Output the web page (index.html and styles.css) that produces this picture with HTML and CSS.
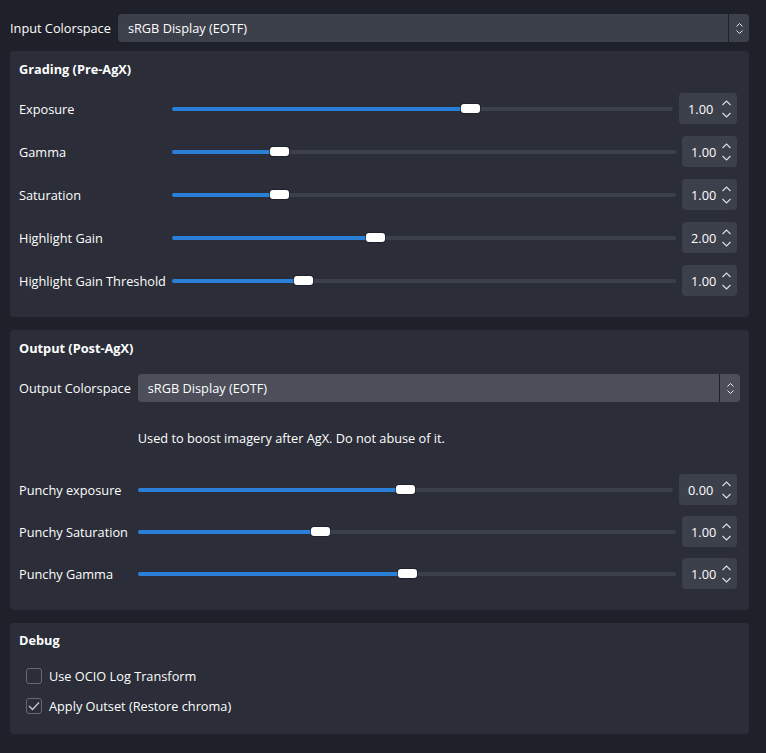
FILE: index.html
```html
<!DOCTYPE html>
<html>
<head>
<meta charset="utf-8">
<link rel="stylesheet" href="styles.css">
</head>
<body>
<div class="page">
  <div class="toprow">
    <span class="lbl">Input Colorspace</span>
    <div class="combo">
      <span class="combo-text">sRGB Display (EOTF)</span>
      <span class="combo-arrow">
        <svg width="7" height="4" viewBox="0 0 7 4"><polyline points="0.5,3.5 3.5,0.5 6.5,3.5" fill="none" stroke="#e6e6e6" stroke-width="1"/></svg>
        <svg width="7" height="4" viewBox="0 0 7 4"><polyline points="0.5,0.5 3.5,3.5 6.5,0.5" fill="none" stroke="#e6e6e6" stroke-width="1"/></svg>
      </span>
    </div>
  </div>

  <section class="panel panel-grading">
    <h2 class="panel-title">Grading (Pre-AgX)</h2>
    <div class="form">
      <span class="lbl">Exposure</span>
      <div class="ctl">
        <div class="slider" style="--p:0.6"><div class="fill"></div><div class="handle"></div></div>
        <div class="spin spin-wide"><span class="val">1.00</span><span class="arrows"><svg width="9" height="6" viewBox="0 0 9 6"><polyline points="0.5,5 4.5,1 8.5,5" fill="none" stroke="#e0e0e0" stroke-width="1.1"/></svg><svg width="9" height="6" viewBox="0 0 9 6"><polyline points="0.5,1 4.5,5 8.5,1" fill="none" stroke="#e0e0e0" stroke-width="1.1"/></svg></span></div>
      </div>
      <span class="lbl">Gamma</span>
      <div class="ctl">
        <div class="slider" style="--p:0.202"><div class="fill"></div><div class="handle"></div></div>
        <div class="spin"><span class="val">1.00</span><span class="arrows"><svg width="9" height="6" viewBox="0 0 9 6"><polyline points="0.5,5 4.5,1 8.5,5" fill="none" stroke="#e0e0e0" stroke-width="1.1"/></svg><svg width="9" height="6" viewBox="0 0 9 6"><polyline points="0.5,1 4.5,5 8.5,1" fill="none" stroke="#e0e0e0" stroke-width="1.1"/></svg></span></div>
      </div>
      <span class="lbl">Saturation</span>
      <div class="ctl">
        <div class="slider" style="--p:0.202"><div class="fill"></div><div class="handle"></div></div>
        <div class="spin"><span class="val">1.00</span><span class="arrows"><svg width="9" height="6" viewBox="0 0 9 6"><polyline points="0.5,5 4.5,1 8.5,5" fill="none" stroke="#e0e0e0" stroke-width="1.1"/></svg><svg width="9" height="6" viewBox="0 0 9 6"><polyline points="0.5,1 4.5,5 8.5,1" fill="none" stroke="#e0e0e0" stroke-width="1.1"/></svg></span></div>
      </div>
      <span class="lbl">Highlight Gain</span>
      <div class="ctl">
        <div class="slider" style="--p:0.401"><div class="fill"></div><div class="handle"></div></div>
        <div class="spin"><span class="val">2.00</span><span class="arrows"><svg width="9" height="6" viewBox="0 0 9 6"><polyline points="0.5,5 4.5,1 8.5,5" fill="none" stroke="#e0e0e0" stroke-width="1.1"/></svg><svg width="9" height="6" viewBox="0 0 9 6"><polyline points="0.5,1 4.5,5 8.5,1" fill="none" stroke="#e0e0e0" stroke-width="1.1"/></svg></span></div>
      </div>
      <span class="lbl">Highlight Gain Threshold</span>
      <div class="ctl">
        <div class="slider" style="--p:0.251"><div class="fill"></div><div class="handle"></div></div>
        <div class="spin"><span class="val">1.00</span><span class="arrows"><svg width="9" height="6" viewBox="0 0 9 6"><polyline points="0.5,5 4.5,1 8.5,5" fill="none" stroke="#e0e0e0" stroke-width="1.1"/></svg><svg width="9" height="6" viewBox="0 0 9 6"><polyline points="0.5,1 4.5,5 8.5,1" fill="none" stroke="#e0e0e0" stroke-width="1.1"/></svg></span></div>
      </div>
    </div>
  </section>

  <section class="panel panel-output">
    <h2 class="panel-title">Output (Post-AgX)</h2>
    <div class="form form-output">
      <span class="lbl">Output Colorspace</span>
      <div class="combo combo-hover">
        <span class="combo-text">sRGB Display (EOTF)</span>
        <span class="combo-arrow">
          <svg width="7" height="4" viewBox="0 0 7 4"><polyline points="0.5,3.5 3.5,0.5 6.5,3.5" fill="none" stroke="#e6e6e6" stroke-width="1"/></svg>
          <svg width="7" height="4" viewBox="0 0 7 4"><polyline points="0.5,0.5 3.5,3.5 6.5,0.5" fill="none" stroke="#e6e6e6" stroke-width="1"/></svg>
        </span>
      </div>
      <span class="desc">Used to boost imagery after AgX. Do not abuse of it.</span>
      <span class="lbl">Punchy exposure</span>
      <div class="ctl">
        <div class="slider" style="--p:0.5"><div class="fill"></div><div class="handle"></div></div>
        <div class="spin spin-wide"><span class="val">0.00</span><span class="arrows"><svg width="9" height="6" viewBox="0 0 9 6"><polyline points="0.5,5 4.5,1 8.5,5" fill="none" stroke="#e0e0e0" stroke-width="1.1"/></svg><svg width="9" height="6" viewBox="0 0 9 6"><polyline points="0.5,1 4.5,5 8.5,1" fill="none" stroke="#e0e0e0" stroke-width="1.1"/></svg></span></div>
      </div>
      <span class="lbl">Punchy Saturation</span>
      <div class="ctl">
        <div class="slider" style="--p:0.333"><div class="fill"></div><div class="handle"></div></div>
        <div class="spin"><span class="val">1.00</span><span class="arrows"><svg width="9" height="6" viewBox="0 0 9 6"><polyline points="0.5,5 4.5,1 8.5,5" fill="none" stroke="#e0e0e0" stroke-width="1.1"/></svg><svg width="9" height="6" viewBox="0 0 9 6"><polyline points="0.5,1 4.5,5 8.5,1" fill="none" stroke="#e0e0e0" stroke-width="1.1"/></svg></span></div>
      </div>
      <span class="lbl">Punchy Gamma</span>
      <div class="ctl">
        <div class="slider" style="--p:0.502"><div class="fill"></div><div class="handle"></div></div>
        <div class="spin"><span class="val">1.00</span><span class="arrows"><svg width="9" height="6" viewBox="0 0 9 6"><polyline points="0.5,5 4.5,1 8.5,5" fill="none" stroke="#e0e0e0" stroke-width="1.1"/></svg><svg width="9" height="6" viewBox="0 0 9 6"><polyline points="0.5,1 4.5,5 8.5,1" fill="none" stroke="#e0e0e0" stroke-width="1.1"/></svg></span></div>
      </div>
    </div>
  </section>

  <section class="panel panel-debug">
    <h2 class="panel-title">Debug</h2>
    <div class="checks">
      <label class="check"><span class="box"></span><span>Use OCIO Log Transform</span></label>
      <label class="check"><span class="box box-on"><svg width="12" height="10" viewBox="0 0 12 10"><polyline points="1,5 4.5,8.5 11,1.5" fill="none" stroke="#c9cad0" stroke-width="1.3"/></svg></span><span>Apply Outset (Restore chroma)</span></label>
    </div>
  </section>
</div>
</body>
</html>
```

FILE: styles.css
```css
html, body {
  margin: 0;
  padding: 0;
  background: #1f212a;
}

body {
  font-family: "Open Sans", "Noto Sans", sans-serif;
  font-size: 12.75px;
  line-height: 18px;
  color: #fefefe;
}

.page {
  padding: 14px 17px 0 10px;
}

.toprow {
  display: flex;
  align-items: center;
  gap: 7px;
  height: 28px;
  margin-bottom: 9px;
}

.toprow .lbl {
  margin-top: -1px;
}

.toprow .combo {
  flex: 1;
}

.combo {
  display: flex;
  align-items: stretch;
  height: 28px;
  background: #3c404b;
  border-radius: 4px;
  overflow: hidden;
}

.combo-hover {
  background: #4c4f59;
}

.combo-text {
  flex: 1;
  display: flex;
  align-items: center;
  padding-left: 10px;
}

.combo-arrow {
  width: 20px;
  border-left: 1px solid #1f212a;
  display: flex;
  flex-direction: column;
  align-items: center;
  justify-content: center;
  gap: 3px;
}

.combo-arrow svg {
  display: block;
}

.panel {
  background: #2b2e38;
  border-radius: 4px;
  padding: 0 9px;
  margin-bottom: 13px;
}

.panel-title {
  margin: 0;
  font-size: 12.75px;
  font-weight: 700;
  line-height: 18px;
}

.panel-grading {
  padding-top: 9px;
  padding-bottom: 21px;
}

.panel-grading .panel-title {
  margin-bottom: 15px;
}

.panel-output {
  padding-top: 9px;
  padding-bottom: 21px;
}

.panel-output .panel-title {
  margin-bottom: 17px;
}

.panel-debug {
  padding-top: 8px;
  padding-bottom: 18px;
}

.panel-debug .panel-title {
  margin-bottom: 17px;
}

.form {
  display: grid;
  grid-template-columns: auto 1fr;
  column-gap: 6px;
  row-gap: 12px;
  grid-auto-rows: 31px;
  align-items: center;
}

.form-output {
  grid-template-rows: 28px 50px 31px 31px 31px;
  row-gap: 11px;
  column-gap: 7px;
}

.desc {
  grid-column: 2;
}

.ctl {
  display: flex;
  align-items: center;
  gap: 6px;
  height: 31px;
}

.slider {
  position: relative;
  flex: 1;
  height: 9px;
}

.slider::before {
  content: "";
  position: absolute;
  left: 0;
  right: 0;
  top: 3px;
  height: 4px;
  border-radius: 2px;
  background: #3c404b;
}

.fill {
  position: absolute;
  left: 0;
  top: 3px;
  height: 4px;
  border-radius: 2px;
  background: #2a7fd9;
  width: calc(var(--p) * (100% - 19px) + 9px);
}

.handle {
  position: absolute;
  top: 0;
  width: 19px;
  height: 9px;
  border-radius: 3px;
  background: #ffffff;
  box-shadow: 0 0 0 1px rgba(20, 22, 28, 0.5);
  left: calc(var(--p) * (100% - 19px));
}

.spin {
  width: 55px;
  height: 31px;
  box-sizing: border-box;
  margin-right: 3px;
  background: #3c404b;
  border-radius: 4px;
  display: flex;
  align-items: center;
  justify-content: space-between;
  padding: 0 6px 0 9px;
}

.spin-wide {
  width: 58px;
}

.arrows {
  display: flex;
  flex-direction: column;
  gap: 6px;
}

.arrows svg {
  display: block;
}

.checks {
  display: flex;
  flex-direction: column;
  gap: 10px;
  padding-left: 7px;
}

.check {
  display: flex;
  align-items: center;
  gap: 7px;
  height: 20px;
}

.box {
  width: 16px;
  height: 16px;
  box-sizing: border-box;
  border: 1.5px solid #656873;
  border-radius: 3px;
  display: flex;
  align-items: center;
  justify-content: center;
}
```
